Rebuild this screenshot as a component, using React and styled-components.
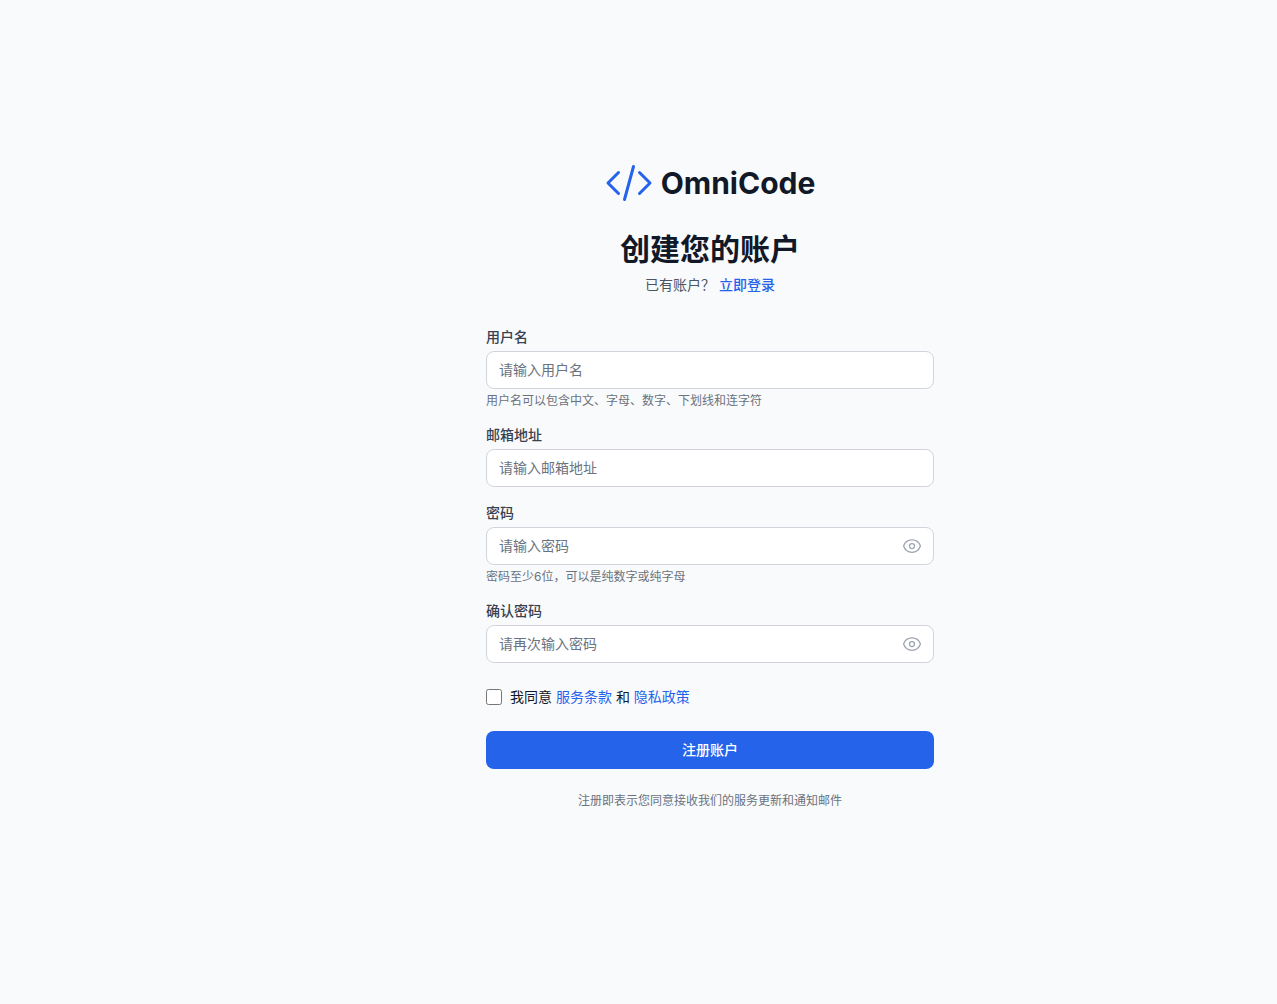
import React from 'react';
import styled, { createGlobalStyle } from 'styled-components';

const GlobalStyle = createGlobalStyle`
  * { box-sizing: border-box; }
  body {
    margin: 0;
    background: #f9fafb;
    font-family: Inter, "Noto Sans CJK SC", sans-serif;
    color: #111827;
  }
`;

const Page = styled.main`
  min-height: 1004px;
  padding: 159px 0 0 143px;
  display: flex;
  justify-content: center;
`;

const Panel = styled.div`
  width: 448px;
`;

const Header = styled.header`
  display: flex;
  flex-direction: column;
  align-items: center;
`;

const Brand = styled.div`
  display: flex;
  align-items: center;
  gap: 8px;
  height: 48px;
`;

const BrandName = styled.span`
  font-size: 30px;
  line-height: 36px;
  font-weight: 700;
  color: #111827;
`;

const Title = styled.h1`
  margin: 24px 0 0;
  font-size: 30px;
  line-height: 36px;
  font-weight: 700;
  color: #111827;
`;

const Subtitle = styled.p`
  margin: 8px 0 0;
  font-size: 14px;
  line-height: 20px;
  color: #4b5563;
`;

const Link = styled.a`
  color: #2563eb;
  font-weight: ${(p) => (p.$strong ? 500 : 400)};
  text-decoration: none;
`;

const Form = styled.form`
  margin-top: 32px;
  display: flex;
  flex-direction: column;
  gap: 16px;
`;

const Field = styled.div`
  display: flex;
  flex-direction: column;
`;

const Label = styled.label`
  font-size: 14px;
  line-height: 20px;
  font-weight: 500;
  color: #374151;
  margin-bottom: 4px;
`;

const InputWrap = styled.div`
  position: relative;
`;

const Input = styled.input`
  display: block;
  width: 100%;
  padding: 8px 12px;
  font-family: inherit;
  font-size: 14px;
  line-height: 20px;
  color: #111827;
  background: #fff;
  border: 1px solid #d1d5db;
  border-radius: 8px;
  outline: none;
  &::placeholder {
    color: #6b7280;
  }
`;

const EyeButton = styled.button`
  position: absolute;
  top: 9px;
  right: 12px;
  width: 20px;
  height: 20px;
  padding: 0;
  border: none;
  background: none;
  color: #9ca3af;
`;

const Hint = styled.p`
  margin: 4px 0 0;
  font-size: 12px;
  line-height: 16px;
  color: #6b7280;
`;

const Agreement = styled.label`
  margin-top: 8px;
  display: flex;
  align-items: center;
  gap: 8px;
  height: 20px;
  font-size: 14px;
  line-height: 20px;
  color: #111827;
`;

const Checkbox = styled.input`
  width: 16px;
  height: 16px;
  margin: 0;
`;

const Submit = styled.button`
  margin-top: 8px;
  padding: 8px 16px;
  border: 1px solid transparent;
  border-radius: 8px;
  background: #2563eb;
  color: #fff;
  font-family: inherit;
  font-size: 14px;
  line-height: 20px;
  font-weight: 500;
`;

const Footnote = styled.p`
  margin: 8px 0 0;
  font-size: 12px;
  line-height: 16px;
  color: #6b7280;
  text-align: center;
`;

const CodeLogo = () => (
  <svg width="48" height="48" viewBox="0 0 24 24" fill="none" stroke="#2563eb" strokeWidth="1.5" strokeLinecap="round" strokeLinejoin="round">
    <path d="M17.25 6.75L22.5 12l-5.25 5.25m-10.5 0L1.5 12l5.25-5.25m7.5-3l-4.5 16.5" />
  </svg>
);

const EyeIcon = () => (
  <svg width="20" height="20" viewBox="0 0 24 24" fill="none" stroke="currentColor" strokeWidth="1.5" strokeLinecap="round" strokeLinejoin="round">
    <path d="M2.036 12.322a1.012 1.012 0 010-.639C3.423 7.51 7.36 4.5 12 4.5c4.638 0 8.573 3.007 9.963 7.178.07.207.07.431 0 .639C20.577 16.49 16.64 19.5 12 19.5c-4.638 0-8.573-3.007-9.963-7.178z" />
    <path d="M15 12a3 3 0 11-6 0 3 3 0 016 0z" />
  </svg>
);

const fields = [
  { label: '用户名', placeholder: '请输入用户名', hint: '用户名可以包含中文、字母、数字、下划线和连字符' },
  { label: '邮箱地址', placeholder: '请输入邮箱地址' },
  { label: '密码', placeholder: '请输入密码', hint: '密码至少6位\uFF0C可以是纯数字或纯字母', secret: true },
  { label: '确认密码', placeholder: '请再次输入密码', secret: true },
];

export default function App() {
  return (
    <>
      <GlobalStyle />
      <Page>
        <Panel>
          <Header>
            <Brand>
              <CodeLogo />
              <BrandName>OmniCode</BrandName>
            </Brand>
            <Title>创建您的账户</Title>
            <Subtitle>
              已有账户{'\uFF1F'} <Link $strong href="#">立即登录</Link>
            </Subtitle>
          </Header>
          <Form onSubmit={(e) => e.preventDefault()}>
            {fields.map((f) => (
              <Field key={f.label}>
                <Label>{f.label}</Label>
                <InputWrap>
                  <Input type={f.secret ? 'password' : 'text'} placeholder={f.placeholder} />
                  {f.secret && (
                    <EyeButton type="button">
                      <EyeIcon />
                    </EyeButton>
                  )}
                </InputWrap>
                {f.hint && <Hint>{f.hint}</Hint>}
              </Field>
            ))}
            <Agreement>
              <Checkbox type="checkbox" />
              <span>
                我同意 <Link href="#">服务条款</Link> 和 <Link href="#">隐私政策</Link>
              </span>
            </Agreement>
            <Submit type="submit">注册账户</Submit>
            <Footnote>注册即表示您同意接收我们的服务更新和通知邮件</Footnote>
          </Form>
        </Panel>
      </Page>
    </>
  );
}
